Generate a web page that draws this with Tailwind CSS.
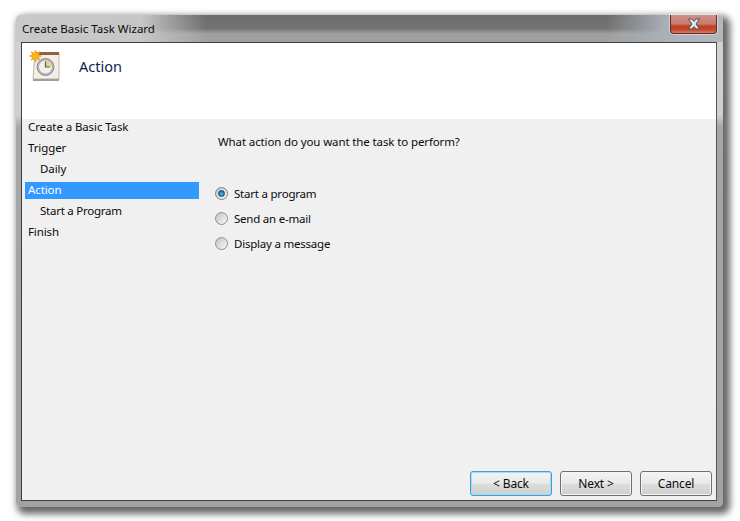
<!DOCTYPE html>
<html lang="en">
<head>
  <meta charset="UTF-8" />
  <title>Create Basic Task Wizard</title>
  <script src="https://cdn.jsdelivr.net/npm/@tailwindcss/browser@4"></script>
</head>
<body class="bg-white h-[521px] w-[740px] overflow-hidden font-['Noto_Sans',sans-serif] text-[11.5px] tracking-[-0.1px] text-[#0a0a0a]">

  <div class="pt-[15px] pl-[16px]">
    <!-- window frame -->
    <div class="relative w-[707px] h-[492px] rounded-[5px] pl-[5px] pr-[6px] pb-[6px] bg-[linear-gradient(180deg,#d2d2d2_0px,#cfcfcf_100px,#a6a6a6_112px,#a2a2a2_100%)] shadow-[4px_4px_7px_3px_rgba(0,0,0,0.6)] flex flex-col">

      <!-- title bar -->
      <div class="h-[27px] shrink-0 -mx-[5px] -mr-[6px] pl-[6px] pt-[1px] rounded-t-[5px] flex items-center bg-[linear-gradient(90deg,#c9c9c9_0px,#c6c6c6_125px,rgba(160,160,160,0)_190px,rgba(160,160,160,0)_590px,#a9b0b6_650px,#b4b8bb_100%),linear-gradient(180deg,#6c6c6c_0%,#737373_50%,#a0a0a0_70%,#a0a0a0_100%)]">
        <span class="tracking-[0px]">Create Basic Task Wizard</span>
      </div>

      <!-- close button -->
      <div class="absolute top-0 right-[6px] w-[47px] h-[19px] rounded-b-[4px] border border-t-0 border-[#5e2a22] shadow-[0_0_0_1px_rgba(255,255,255,0.45)] flex items-center justify-center bg-[linear-gradient(180deg,#cf9088_0%,#c77a6e_50%,#c0401f_62%,#c8442a_80%,#d0806f_100%)]">
        <svg width="16" height="12" viewBox="0 0 16 12">
          <path d="M2.500 1h3.500l2 2.500L10 1h3.500l-3.500 5 3.500 5H10L8 8.500 6 11H2.500L6 6z" fill="#e8ebef" stroke="#4b4f55" stroke-width="1" />
        </svg>
      </div>

      <!-- client area -->
      <div class="flex-1 flex flex-col border border-[#3f3f3f] border-r-[#555] bg-[#f0f0f0]">
        <!-- header -->
        <div class="h-[76px] shrink-0 bg-white flex items-start pl-[7px] pt-[7px]">
          <svg width="31" height="32" viewBox="0 0 31 32" class="shrink-0">
            <path d="M6 3h24v26H4z" fill="#f4efe2" stroke="#b9b6ac" />
            <rect x="4" y="29" width="26" height="2" fill="#9d9d9d" />
            <rect x="8" y="2" width="22" height="3" fill="#8f5f48" />
            <circle cx="16.500" cy="17" r="8.500" fill="#a9b4bd" stroke="#8a8f94" />
            <circle cx="16.500" cy="17" r="6.500" fill="#f3f1e6" />
            <path d="M16.500 17v-6.500a6.500 6.500 0 0 1 6.500 6.500z" fill="#efcf8c" />
            <path d="M16.500 11.500V17h4.500" fill="none" stroke="#55606a" stroke-width="1.200" />
            <path d="M6.500 0l1.300 3 3-1.300-1.200 3 3 1.300-3 1.200 1.200 3-3-1.200-1.300 3.300-1.300-3.300-3 1.200 1.200-3-3-1.200 3-1.300-1.200-3 3 1.300z" fill="#f7b21f" stroke="#f08a10" stroke-width=".5" />
          </svg>
          <span class="ml-[19px] mt-[6px] text-[14.5px] tracking-normal leading-[20px] text-[#0c1f50]">Action</span>
        </div>

        <div class="flex-1 flex min-h-0">
          <!-- step list -->
          <div class="w-[196px] shrink-0 pl-[3px]">
            <div class="h-[21px] pl-[3px] leading-[16px]">Create a Basic Task</div>
            <div class="h-[21px] pl-[3px] leading-[16px]">Trigger</div>
            <div class="h-[21px] pl-[15px] leading-[16px]">Daily</div>
            <div class="h-[17px] mb-[4px] pl-[3px] leading-[16px] bg-[#3399ff] text-white w-[174px]">Action</div>
            <div class="h-[21px] pl-[15px] leading-[16px] tracking-[-0.25px]">Start a Program</div>
            <div class="h-[21px] pl-[3px] leading-[16px]">Finish</div>
          </div>

          <!-- main panel -->
          <div class="flex-1 flex flex-col min-w-0">
            <p class="pt-[14px] h-[66px] leading-[17px] tracking-[-0.12px]">What action do you want the task to perform?</p>
            <div class="flex flex-col gap-[8px] -ml-[3px] tracking-[-0.22px]">
              <label class="flex items-center gap-[6px] h-[17px]">
                <span class="size-[13px] rounded-full border border-[#808080] bg-[linear-gradient(135deg,#c4c4c4,#f8f8f8)] flex items-center justify-center">
                  <span class="size-[7px] rounded-full border border-[#0d4a78] bg-[radial-gradient(circle_at_50%_60%,#58b4e8,#0c5c94)]"></span>
                </span>
                Start a program
              </label>
              <label class="flex items-center gap-[6px] h-[17px]">
                <span class="size-[13px] rounded-full border border-[#8e8e8e] bg-[linear-gradient(135deg,#c4c4c4,#f8f8f8)]"></span>
                Send an e-mail
              </label>
              <label class="flex items-center gap-[6px] h-[17px]">
                <span class="size-[13px] rounded-full border border-[#8e8e8e] bg-[linear-gradient(135deg,#c4c4c4,#f8f8f8)]"></span>
                Display a message
              </label>
            </div>

            <!-- wizard buttons -->
            <div class="mt-auto flex justify-end gap-[8px] pr-[4px] pb-[4px] text-[12px] tracking-[-0.15px]">
              <button class="w-[82px] h-[25px] rounded-[3px] border border-[#3c9fd6] shadow-[inset_0_0_0_1px_#a8dcf5] bg-[linear-gradient(180deg,#f2f2f2_0%,#ebebeb_48%,#dddddd_52%,#cfcfcf_100%)]">&lt; Back</button>
              <button class="w-[72px] h-[25px] rounded-[3px] border border-[#707070] shadow-[inset_0_0_0_1px_#f6f6f6] bg-[linear-gradient(180deg,#f2f2f2_0%,#ebebeb_48%,#dddddd_52%,#cfcfcf_100%)]">Next &gt;</button>
              <button class="w-[72px] h-[25px] rounded-[3px] border border-[#707070] shadow-[inset_0_0_0_1px_#f6f6f6] bg-[linear-gradient(180deg,#f2f2f2_0%,#ebebeb_48%,#dddddd_52%,#cfcfcf_100%)]">Cancel</button>
            </div>
          </div>
        </div>
      </div>
    </div>
  </div>

</body>
</html>
